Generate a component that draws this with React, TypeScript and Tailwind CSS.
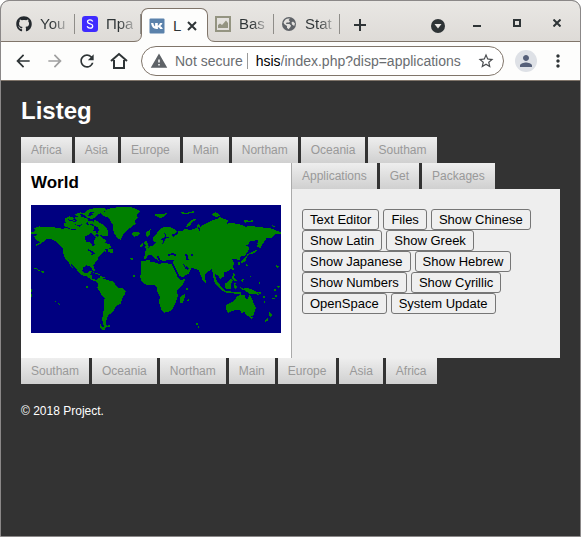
import type { ReactNode } from "react";
import { FaGithub } from "react-icons/fa";
import { MdArrowBack, MdArrowForward, MdMoreVert, MdPerson, MdRefresh, MdStarBorder, MdWarning } from "react-icons/md";

const regions = ["Africa", "Asia", "Europe", "Main", "Northam", "Oceania", "Southam"];
const sections = ["Applications", "Get", "Packages"];
const apps = [
  "Text Editor",
  "Files",
  "Show Chinese",
  "Show Latin",
  "Show Greek",
  "Show Japanese",
  "Show Hebrew",
  "Show Numbers",
  "Show Cyrillic",
  "OpenSpace",
  "System Update",
];

function SiteTabs({ items, label }: { items: string[]; label: string }) {
  return (
    <nav aria-label={label} className="flex gap-[3px]">
      {items.map((item) => (
        <a
          key={item}
          href={"#" + item}
          className="h-[26px] bg-linear-to-b from-[#eeeeee] to-[#d0d0d0] px-[10px] text-xs leading-[26px] text-[#999999]"
        >
          {item}
        </a>
      ))}
    </nav>
  );
}

function BrowserTab({ icon, title }: { icon: ReactNode; title: string }) {
  return (
    <button className="flex h-5 w-[66px] items-center gap-2 border-r border-[#8f8d89] pl-[7px]">
      <span className="flex w-4 shrink-0 justify-center">{icon}</span>
      <span className="bg-linear-to-r from-[#2e3436] from-50% to-[#2e3436]/30 bg-clip-text text-left text-[15px] leading-5 whitespace-nowrap text-transparent">
        {title}
      </span>
    </button>
  );
}

function TabStrip() {
  return (
    <div className="flex h-[41px] items-end border-b border-[#80756a] bg-linear-to-b from-[#e9e7e4] to-[#dedbd7]">
      <div className="flex min-w-0 items-end">
        <div className="flex h-[34px] w-[140px] items-center pl-2">
          <BrowserTab icon={<FaGithub className="size-4 text-[#24292e]" />} title="You" />
          <BrowserTab
            icon={
              <svg viewBox="0 0 16 16" className="size-4" aria-hidden="true">
                <rect width="16" height="16" rx="3" fill="#3f2bff" />
                <path d="M10.700 5.400C10.200 4.300 9.200 3.900 8 3.900c-1.500 0-2.500.7-2.500 1.900 0 2.800 5.200 1.300 5.200 4.100 0 1.400-1.100 2.200-2.700 2.200-1.300 0-2.400-.6-2.800-1.900" fill="none" stroke="#fff" strokeWidth="1.300" />
              </svg>
            }
            title="Пра"
          />
        </div>
        <div className="relative -mb-px flex h-[34px] w-[67px] items-center rounded-t-[7px] border-x border-t border-[#80756a] bg-[#fdfdfc] pl-[7px]">
          <svg viewBox="0 0 8 8" className="absolute bottom-0 -left-2 size-2" aria-hidden="true">
            <path d="M0 7.500Q7.500 7.500 7.500 0H8V8H0Z" fill="#fdfdfc" />
            <path d="M0 7.500Q7.500 7.500 7.500 0" fill="none" stroke="#80756a" />
          </svg>
          <svg viewBox="0 0 8 8" className="absolute -right-2 bottom-0 size-2" aria-hidden="true">
            <path d="M8 7.500Q.5 7.500.5 0H0V8H8Z" fill="#fdfdfc" />
            <path d="M8 7.500Q.5 7.500.5 0" fill="none" stroke="#80756a" />
          </svg>
          <button className="flex items-center gap-2 text-[15px] leading-5 text-[#2e3436]">
            <svg viewBox="0 0 16 16" className="size-4" aria-hidden="true">
              <rect x=".5" y=".5" width="15" height="15" rx="1" fill="#5b82ab" />
              <path d="M2 5h2.300c.4 1.700 1 2.900 1.800 3.500V5h2.700v2.700C9.900 7.200 10.600 6 11 5h2.500c-.4 1.200-1.200 2.200-2.200 3.100 1.200.8 2.100 1.800 2.600 2.900h-2.700c-.5-1-1.300-1.700-2.300-2v2H7.600C4.500 11 2.600 8.800 2 5Z" fill="#fff" />
            </svg>
            <span>L</span>
          </button>
          <button aria-label="Close tab" className="ml-[6px] text-[#2e3436]">
            <svg viewBox="0 0 10 10" className="size-[10px]" aria-hidden="true">
              <path d="m1 1 8 8M9 1 1 9" stroke="currentColor" strokeWidth="2" />
            </svg>
          </button>
        </div>
        <div className="flex h-[34px] items-center">
          <BrowserTab
            icon={
              <svg viewBox="0 0 16 16" className="size-4" aria-hidden="true">
                <rect x="1" y="1" width="14" height="14" fill="none" stroke="#949481" strokeWidth="2" />
                <path d="M3 12V9l2-1.500 2 1.500 4-4.500 2 2.500v5Z" fill="#949481" />
              </svg>
            }
            title="Bas"
          />
          <BrowserTab
            icon={
              <svg viewBox="0 0 14 14" className="size-[14px]" aria-hidden="true">
                <circle cx="7" cy="7" r="7" fill="#5f6368" />
                <path d="M8 1.600 6.600 3 8 4.400 7 5.600H4.600L4 7h3.500l1.500 1.500-.5 1.500-2 2.200-1.500-1.500V9L2.400 7.200 1.500 5.800A6 6 0 0 1 8 1.600Z" fill="#e3e1de" />
                <path d="m9.500 5.500 1.500-1 2 2-.8 2.500L10 7.500Z" fill="#e3e1de" />
              </svg>
            }
            title="Stat"
          />
        </div>
        <button aria-label="New tab" className="mb-2 ml-3 text-[#2e3436]">
          <svg viewBox="0 0 16 16" className="size-4" aria-hidden="true">
            <path d="M8 2v12M2 8h12" stroke="currentColor" strokeWidth="2" />
          </svg>
        </button>
      </div>
      <div className="mb-2 ml-auto flex items-center pr-[19px] text-[#2e3436]">
        <button aria-label="Search tabs" className="mr-7">
          <svg viewBox="0 0 14 14" className="size-[14px]" aria-hidden="true">
            <circle cx="7" cy="7" r="7" fill="currentColor" />
            <path d="M3.500 5h7L7 9.500Z" fill="#eceae7" />
          </svg>
        </button>
        <button aria-label="Minimize" className="mr-8 mb-[6px]">
          <svg viewBox="0 0 8 8" className="size-2" aria-hidden="true">
            <path d="M0 7h8" stroke="currentColor" strokeWidth="2" />
          </svg>
        </button>
        <button aria-label="Maximize" className="mr-8 mb-[6px]">
          <svg viewBox="0 0 8 8" className="size-2" aria-hidden="true">
            <rect x="1" y="1" width="6" height="6" fill="none" stroke="currentColor" strokeWidth="2" />
          </svg>
        </button>
        <button aria-label="Close window" className="mb-[6px]">
          <svg viewBox="0 0 8 8" className="size-2" aria-hidden="true">
            <path d="m.5.5 7 7M7.500.5l-7 7" stroke="currentColor" strokeWidth="2" />
          </svg>
        </button>
      </div>
    </div>
  );
}

function Toolbar() {
  return (
    <div className="flex h-[39px] items-center border-b border-[#80756a] bg-[#fdfdfc] pl-3 text-[#2e3436]">
      <div className="flex items-center gap-3">
        <button aria-label="Back">
          <MdArrowBack className="size-5" />
        </button>
        <button aria-label="Forward" className="text-[#a0a0a0]">
          <MdArrowForward className="size-5" />
        </button>
        <button aria-label="Reload">
          <MdRefresh className="size-5" />
        </button>
        <button aria-label="Home">
          <svg viewBox="0 0 20 20" className="size-5" aria-hidden="true">
            <path d="M2 10 10 3l8 7M5 9v8h10V9" fill="none" stroke="currentColor" strokeWidth="2" />
          </svg>
        </button>
      </div>
      <form className="ml-3 flex h-[30px] min-w-0 flex-1 items-center rounded-full border border-[#80756a] bg-white pr-2 text-sm">
        <MdWarning className="ml-2 size-[18px] shrink-0 text-[#5f6368]" />
        <span className="ml-[7px] shrink-0 text-[#6a6d71]">Not secure</span>
        <span className="mr-2 ml-1 h-4 w-px shrink-0 bg-[#9a9a9a]" />
        <label htmlFor="address" className="text-black">
          hsis
        </label>
        <input id="address" defaultValue="/index.php?disp=applications" className="min-w-0 flex-1 text-[#6a6d71] outline-none" />
        <button type="button" aria-label="Bookmark this page" className="text-[#4a4d50]">
          <MdStarBorder className="size-[18px]" />
        </button>
      </form>
      <button aria-label="Profile" className="ml-[11px] flex size-[22px] items-center justify-center rounded-full bg-[#dee1e6] text-[#566079]">
        <MdPerson className="size-[18px]" />
      </button>
      <button aria-label="Menu" className="mr-3 ml-[11px]">
        <MdMoreVert className="size-5" />
      </button>
    </div>
  );
}

function WorldMap() {
  return (
    <svg viewBox="15 15 750 384" role="img" aria-label="World map" className="h-[128px] w-[250px]" shapeRendering="crispEdges">
      <rect x="15" y="15" width="750" height="384" fill="#000080" />
      <g fill="#008000">
        <path d="M20 97 28 92 24 84 40 79 60 82 80 80 92 84 110 86 122 84 140 90 158 88 172 94 186 92 192 84 186 76 196 74 204 80 202 92 196 98 188 106 178 108 176 118 182 126 194 128 200 138 206 136 204 122 210 112 206 106 214 110 222 108 230 114 240 122 238 128 252 134 256 142 246 148 236 148 242 156 234 154 228 162 222 166 216 174 214 182 206 190 202 196 204 202 208 214 202 214 196 204 190 198 182 196 172 202 169 211 174 219 184 220 190 212 198 213 192 224 198 227 199 236 210 239 204 244 194 238 184 230 170 226 156 216 152 208 140 194 132 187 138 200 146 210 138 204 126 184 116 174 112 160 112 146 100 134 92 126 76 118 62 116 56 122 46 130 32 137 26 136 44 126 36 124 28 116 24 110 34 104 20 101Z" />
        <path d="m114 70 14-6 14 2 18-4 16 6 6 10-12 10-14-2-16 2-16-6-8-3ZM116 56l14-7 12 4 6 10-14 3-18-1ZM148 42l14-5 12 4-8 6-16 2ZM168 60l14-6 6 10-12 10-8-3ZM172 44l10-12 12-5 20-4 24 2 4 5-12 6-14 8-8 8-12 5-14-4-2-4ZM184 64l12-2 8 4 2-6 10 5 12 7 12 10 7 11-2 14-12 2-9-6-4 5-6-8 6-10-5-9-10-3-4-6-12 2ZM196 94l12-2 5 9-8 6-9-7ZM146 52l14-4 14 4 4 8-12 6-14-4ZM136 66l24 2 26 6 10 8-12 12-34-4Z" />
        <path d="m222 39 16-5 8-7 18-4 30-3 28 3 20 10-10 11 3 9-8 10 2 8-12 9-12 9-9 8-8 12-4 10-7-2-11-14-5-14 1-12-8-12-5-12-18-5ZM322 97l14-1 6 4-3 6-13 4-9-6ZM244 145l16 3v11l-12-2ZM198 216l14 3 12 6-14-3ZM222 229l18 2-6 4-12-2Z" />
        <path d="m208 241 10-7 12 1 20 7 12 2 8 12 8 7 14 3 7 7-3 12-8 10-3 15-14 7-7 13-10 12-7 3-5 14-4 14 8 8-10 3-4-10-3-14 1-16 3-14v-21l3-15-8-7-8-14-6-11 3-10ZM221 370l6 8 12 9-7 4-9-7ZM244 377l10-2-2 5-10 1Z" />
        <path d="M24 204h8v3h-8zM34 208l10 4-6 2zM46 213h7v5h-6zM86 301l6 5-3 2-4-4zM95 308l9 5-5 1zM180 257h5v7h-4zM312 174h8v5h-6zM321 226h5v4h-5zM15 268h4v7h-4zM15 283h4v7h-4zM16 97h5v4h-5z" />
      </g>
      <g fill="#008000" transform="translate(372 0)">
        <path d="M-15 164-12 143-3 144 2 138 10 137 18 128 10 122 10 112 20 100 30 87 44 80 60 80 73 88 82 94 76 100 65 103 70 110 84 102 85 92 96 94 105 87 122 90 140 84 144 70 151 80 165 72 176 66 190 60 202 57 208 50 216 54 236 62 230 71 248 69 270 73 286 80 304 78 330 82 350 83 370 87 382 93 393 97 391 102 374 103 367 113 350 113 341 128 330 145 322 140 323 130 334 118 319 121 301 123 295 134 283 134 297 141 295 154 284 167 272 170 268 183 260 177 246 177 252 190 247 204 236 212 222 218 222 229 211 237 205 227 195 222 198 238 209 256 204 256 190 233 188 218 184 207 176 214 164 225 164 239 158 241 151 223 146 211 132 205 116 206 106 195 110 205 123 208 116 221 98 231 89 228 76 204 69 190 71 179 57 180 40 183 31 179 26 168 20 170 26 182 12 173 4 164-6 166-11 175-20 178Z" />
        <path d="m-28 185 26-6 3 6 14 2 11 5 16-3 22 3 9 16 10 23 8 9 16-3-9 18-16 17 1 18-7 19-9 19-12 8-12 2-9-8-6-21 1-20-7-15-2-13-10-7-20 1-14-9-6-17 4-13Z" />
        <path d="M95 287l10-5-1 12-7 17-6-2v-16ZM12 44l15-2 23-2-5 8-10 6-10-2ZM91 37l22 1 16-4 7 2-14 4-22 2ZM110 77l8-11 13-9 11-1-12 8-12 14-10 4ZM186 42l11-6 7 5 7 7-12 3-10-4ZM282 60l16 2 10-1v4l-24 3ZM367 76l9 4-6 2Z" />
        <path d="m-18 125 9-2 2 9 5 9-14 4 3-9-7-6ZM-28 133l6-3v9l-8 2ZM-14 106l4-10 12-8-2 14-7 8Z" />
        <path d="m324 120 10-5 7 3-5 17-11 5-3-8ZM317 150l4 1-9 9-13 3-8 8-5 14-14 6 2-9 13-10 6-10ZM266 184l5 3-3 8-5-3ZM289 190l5 6-2 4-5-5ZM249 202l4 5-4 6-3-5ZM248 218l7 7-3 8 9 8-7 3-7-8ZM225 250l10-5 9-10 5 6-7 13 1 12-14 2-5-7ZM192 235l11 12 15 17 7 9-10-1-12-13-11-14ZM222 272l18 2 18 3-3 4-32-4ZM251 251l8-5-3 8 6 6-6 9-4-8ZM274 239l7-1-2 6-4 4ZM270 261l11 5 11-3 23 10 14 12-14-3-17-1-14-10-10-3ZM160 238l8 3-1 7-6-1ZM255 277h18v4h-18z" />
        <path d="m235 311 16-7 10-14 10-7 9 2 5-2-1 8 8 7 7-14 8 16 5 14 6 9-5 14-3 10-10 4-11-6-6-9-8 4-6-11-13 1-12 4-10 5-5-11-1-12ZM300 350l8 2-4 5-4-3ZM359 335l8 10-7 7-3-9ZM356 350l-3 12-10 5 4-9ZM110 263l6 3-4 6-5-3ZM113 298l7 1-4 4-6-1ZM138 370h5v4h-5zM144 378l6 3-4 3ZM319 275l15 3-4 5ZM328 244l4 8h-4ZM340 289h6v4h-6zM341 302l7 4-5 2ZM367 294h7v4h-7zM374 286h7v4h-7zM372 268h5v5h-5zM383 256l6 3-2 5-5-3ZM379 195l7 4-3 4-5-4ZM299 222l4 10h-3Z" />
      </g>
      <g fill="#000080">
        <path d="m122 56 13 4 10-3v4l-15 3ZM147 73l13 3 7-3-7 8ZM190 38l18-3-11 7 8 3-18 3ZM162 41l9 2-6 5ZM187 148l12 6 10 8-7-1-15-9ZM194 165l7-8-2 9ZM178 112l6-6 10 7 4 12-8 2-11-5Z" />
        <path d="m426 164 11-5 15 3-2 5-15-1-9 3ZM478 162h6l2 10 3 8h-7l-3-9ZM495 163h5v5h-5zM405 119l12-10-2-10 6 3-1 9 9 1-10 4-6 14-4 1 2-11ZM437 190l5 1 18 38-5-3ZM473 192l9 13 4 5-6-2-9-14ZM515 77l6 7 2 13-5-8Z" />
      </g>
    </svg>
  );
}

export default function App() {
  return (
    <div className="flex min-h-screen flex-col overflow-hidden rounded-t-[9px] border border-[#8b8888] bg-[#333333] font-['Liberation_Sans',Arial,sans-serif]">
      <header>
        <TabStrip />
        <Toolbar />
      </header>
      <div className="px-5 pt-4">
        <h1 className="mb-3 text-2xl leading-7 font-bold text-white">Listeg</h1>
        <SiteTabs items={regions} label="Regions" />
        <main className="flex min-h-[195px]">
          <section className="shrink-0 bg-white px-[10px] pt-[10px]">
            <h2 className="mb-3 text-[17px] leading-5 font-bold text-black">World</h2>
            <WorldMap />
          </section>
          <section className="flex min-w-0 flex-1 flex-col border-l border-[#aaaaaa]">
            <SiteTabs items={sections} label="Sections" />
            <div className="flex flex-1 flex-wrap content-start gap-x-1 bg-[#eeeeee] px-[10px] pt-5">
              {apps.map((app) => (
                <button
                  key={app}
                  className="h-[21px] rounded-[3px] border border-[#767676] bg-[#efefef] px-[7px] text-[13px] leading-[19px] text-black"
                >
                  {app}
                </button>
              ))}
            </div>
          </section>
        </main>
        <SiteTabs items={[...regions].reverse()} label="Regions, reversed" />
        <footer className="mt-5 text-xs leading-[14px] text-white">© 2018 Project.</footer>
      </div>
    </div>
  );
}
